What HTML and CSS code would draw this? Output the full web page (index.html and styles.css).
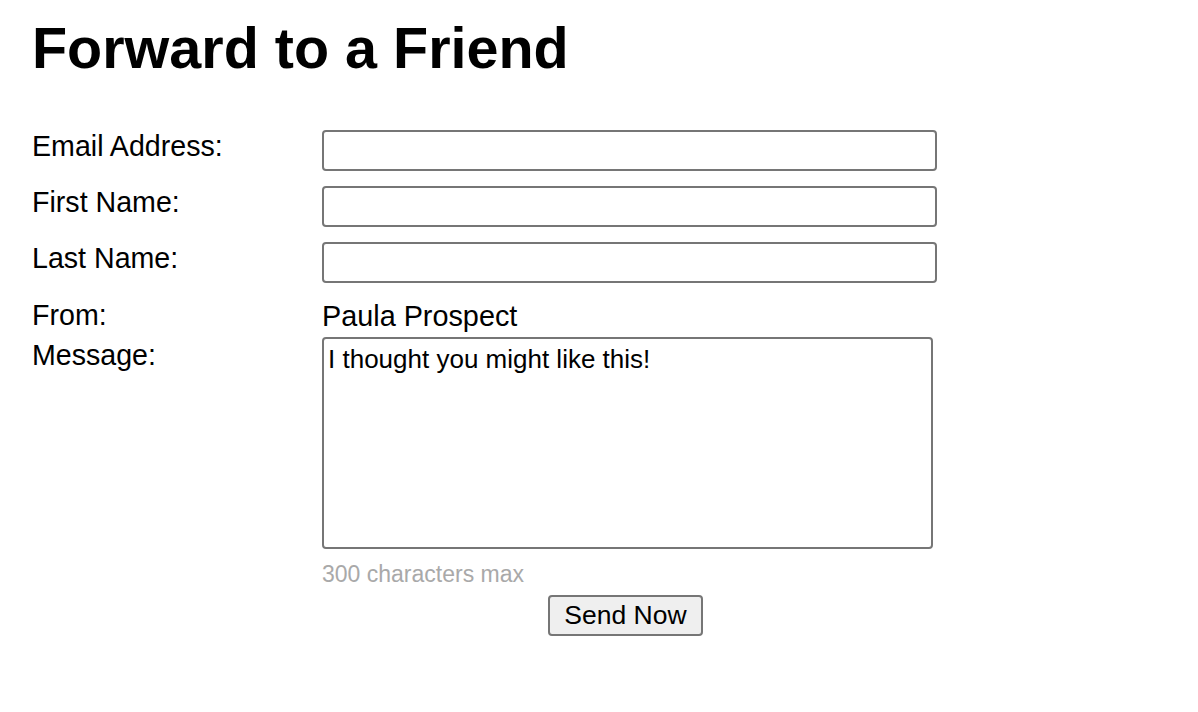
FILE: index.html
```html
<!DOCTYPE html>
<html lang="en">
<head>
<meta charset="utf-8">
<title>Forward to a Friend</title>
<link rel="stylesheet" href="styles.css">
</head>
<body>
<div class="page">
  <h1 class="title">Forward to a Friend</h1>
  <form class="form">
    <div class="row">
      <label class="label" for="email">Email Address:</label>
      <input class="field" id="email" type="text">
    </div>
    <div class="row">
      <label class="label" for="first">First Name:</label>
      <input class="field" id="first" type="text">
    </div>
    <div class="row">
      <label class="label" for="last">Last Name:</label>
      <input class="field" id="last" type="text">
    </div>
    <div class="row row-from">
      <span class="label">From:</span>
      <span class="value">Paula Prospect</span>
    </div>
    <div class="row row-message">
      <label class="label" for="msg">Message:</label>
      <div class="col">
        <textarea class="message" id="msg">I thought you might like this!</textarea>
        <div class="hint">300 characters max</div>
        <div class="actions">
          <button class="send" type="button">Send Now</button>
        </div>
      </div>
    </div>
  </form>
</div>
</body>
</html>
```

FILE: styles.css
```css
html, body {
  margin: 0;
  padding: 0;
  background: #ffffff;
}

body {
  font-family: "Liberation Sans", Arial, Helvetica, sans-serif;
  color: #000000;
}

.page {
  padding: 15px 0 0 32px;
}

.title {
  margin: 0;
  font-size: 57.5px;
  line-height: 66px;
  font-weight: bold;
}

.form {
  margin-top: 49px;
  display: flex;
  flex-direction: column;
}

.row {
  display: flex;
  align-items: flex-start;
  margin-bottom: 15px;
}

.label {
  width: 290px;
  flex: none;
  font-size: 28.6px;
  line-height: 32px;
  padding-top: 0;
}

.field {
  box-sizing: border-box;
  width: 615px;
  height: 41px;
  margin: 0;
  border: 2px solid #767676;
  border-radius: 4px;
  background: #ffffff;
  font-family: inherit;
  font-size: 26px;
  padding: 2px 4px;
}

.row-from {
  margin-top: 1px;
  margin-bottom: 3px;
}

.value {
  font-size: 28.8px;
  line-height: 32px;
  padding-top: 1px;
}

.row-message .label {
  padding-top: 4px;
}

.col {
  display: flex;
  flex-direction: column;
}

.message {
  display: block;
  box-sizing: border-box;
  width: 611px;
  height: 212px;
  margin: 2px 0 0 0;
  border: 2px solid #767676;
  border-radius: 4px;
  padding: 5px 4px;
  font-family: inherit;
  font-size: 26px;
  line-height: normal;
  color: #000000;
  resize: none;
}

.hint {
  margin-top: 12px;
  font-size: 23px;
  line-height: 26px;
  color: #a9a9a9;
}

.actions {
  margin-top: 8px;
  padding-left: 226px;
}

.send {
  box-sizing: border-box;
  width: 155px;
  height: 41px;
  margin: 0;
  padding: 0;
  border: 2px solid #767676;
  border-radius: 4px;
  background: #efefef;
  font-family: inherit;
  font-size: 26.5px;
  color: #000000;
}
```
